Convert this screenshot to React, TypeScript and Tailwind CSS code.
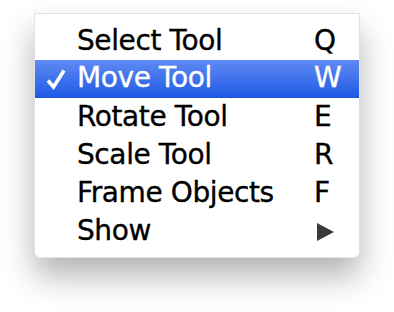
const items = [
  { label: "Select Tool", key: "Q" },
  { label: "Move Tool", key: "W", active: true },
  { label: "Rotate Tool", key: "E" },
  { label: "Scale Tool", key: "R" },
  { label: "Frame Objects", key: "F" },
  { label: "Show", submenu: true },
];

const App = () => {
  return (
    <div className="w-[394px] h-[312px] bg-white pt-[13px] pl-[34px]">
      {/* menu panel */}
      <div className="w-[326px] h-[245px] bg-white border border-[#e2e2e2] rounded-b-[6px] pt-[8px] shadow-[0_18px_32px_rgba(0,0,0,0.3)] font-['DejaVu_Sans',sans-serif] text-[28px] tracking-[-0.4px] [-webkit-text-stroke:0.35px_currentColor]">
        {items.map((item) => (
          <div
            key={item.label}
            className={
              item.active
                ? "flex items-center h-[38px] bg-gradient-to-b from-[#5f89f2] to-[#1d5ae6] border-b border-[#1a52d6] text-white"
                : "flex items-center h-[38px] text-black"
            }
          >
            <div className="w-[42px] h-full shrink-0 flex items-center pl-[11px]">
              {item.active && (
                <svg width="20" height="22" viewBox="0 0 20 22" className="shrink-0">
                  <path d="M2 12.5 L7.5 19 L18 2.5" fill="none" stroke="white" strokeWidth="3.6" />
                </svg>
              )}
            </div>
            <span className="flex-1 leading-none pb-[1px]">{item.label}</span>
            <div className="w-[45px] shrink-0 leading-none pb-[1px]">
              {item.submenu ? (
                <svg width="17" height="18" viewBox="0 0 17 18" className="ml-[3px] mt-[3px]">
                  <path d="M0 0 L17 9 L0 18 Z" fill="#3a3a3a" />
                </svg>
              ) : (
                item.key
              )}
            </div>
          </div>
        ))}
      </div>
    </div>
  );
};

export default App;
